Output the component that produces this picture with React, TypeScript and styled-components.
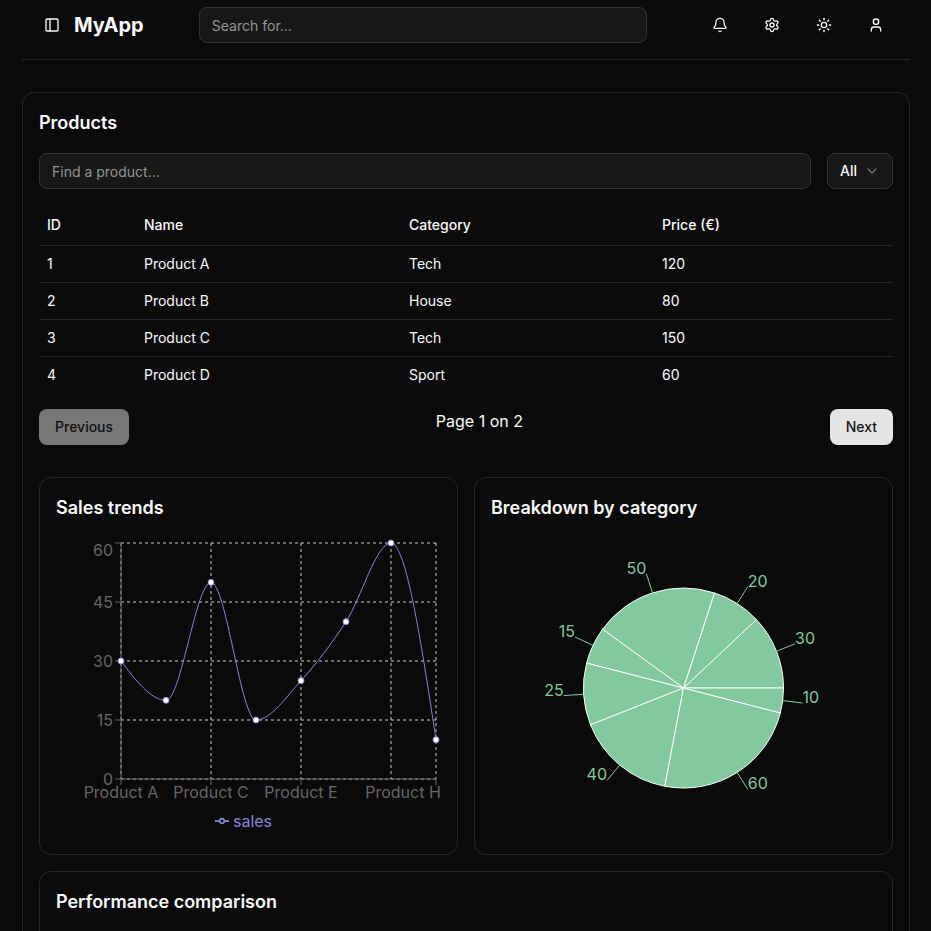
import React from "react";
import styled, { createGlobalStyle } from "styled-components";
import { PanelLeft, Bell, Settings, Sun, User, ChevronDown } from "lucide-react";

const Global = createGlobalStyle`
  html, body { margin: 0; padding: 0; background: #0a0a0a; }
  * { box-sizing: border-box; }
  body { font-family: Inter, "Liberation Sans", sans-serif; color: #fafafa; font-size: 16px; line-height: 24px; }
  input::placeholder { color: #949494; opacity: 1; }
`;

const Page = styled.div`
  padding: 0 21px 32px 22px;
`;
const Header = styled.header`
  height: 60px;
  padding: 7px 16px 16px 12px;
  border-bottom: 1px solid #262626;
  display: flex;
  align-items: center;
  justify-content: space-between;
`;
const Brand = styled.div`
  display: flex;
  align-items: center;
  gap: 4px;
`;
const IconButton = styled.button`
  width: 36px;
  height: 36px;
  padding: 0;
  border: 0;
  background: transparent;
  color: #fafafa;
  display: flex;
  align-items: center;
  justify-content: center;
`;
const Logo = styled.span`
  font-size: 20px;
  line-height: 28px;
  font-weight: 700;
`;
const TextField = styled.input<{ $wide?: boolean }>`
  height: 36px;
  ${(p) => (p.$wide ? "flex: 1; min-width: 0;" : "width: 448px;")}
  padding: 4px 12px;
  border-radius: 8px;
  border: 1px solid #343434;
  background: #171717;
  color: #fafafa;
  font: 400 14px/20px Inter, "Liberation Sans", sans-serif;
  outline: none;
`;
const IconRow = styled.div`
  display: flex;
  gap: 16px;
`;
const Main = styled.main`
  margin-top: 32px;
  padding: 16px;
  border: 1px solid #262626;
  border-radius: 12px;
`;
const CardTitle = styled.h2`
  margin: 0;
  font-size: 18px;
  line-height: 28px;
  font-weight: 600;
  color: #fafafa;
`;
const Toolbar = styled.div`
  display: flex;
  gap: 16px;
  margin-top: 16px;
  margin-bottom: 16px;
`;
const SelectBox = styled.button`
  width: 66px;
  height: 36px;
  padding: 0 12px;
  border-radius: 8px;
  border: 1px solid #343434;
  background: #171717;
  color: #fafafa;
  font: 500 14px/20px Inter, "Liberation Sans", sans-serif;
  display: flex;
  align-items: center;
  justify-content: space-between;
  svg { color: #737373; }
`;
const Table = styled.table`
  width: 854px;
  table-layout: fixed;
  border-collapse: collapse;
  font-size: 14px;
  line-height: 20px;
`;
const Head = styled.th<{ $w: number }>`
  width: ${(p) => p.$w}px;
  height: 40px;
  padding: 0 8px;
  text-align: left;
  font-weight: 500;
  color: #fafafa;
  border-bottom: 1px solid #262626;
`;
const Row = styled.tr`
  border-bottom: 1px solid #262626;
  &:last-child { border-bottom: 0; }
`;
const Cell = styled.td`
  padding: 8px;
  font-weight: 400;
  color: #fafafa;
`;
const Pager = styled.div`
  margin-top: 16px;
  display: flex;
  justify-content: space-between;
  align-items: flex-start;
`;
const PageLabel = styled.span`
  font-size: 16px;
  line-height: 24px;
  color: #fafafa;
`;
const PagerButton = styled.button<{ $off?: boolean }>`
  height: 36px;
  padding: 0 16px;
  border: 0;
  border-radius: 8px;
  background: #e5e5e5;
  color: #171717;
  opacity: ${(p) => (p.$off ? 0.5 : 1)};
  font: 500 14px/20px Inter, "Liberation Sans", sans-serif;
`;
const ChartGrid = styled.div`
  margin-top: 32px;
  display: grid;
  grid-template-columns: 419px 419px;
  gap: 16px;
`;
const Card = styled.section<{ $span?: boolean }>`
  padding: 16px;
  border: 1px solid #262626;
  border-radius: 12px;
  ${(p) => (p.$span ? "grid-column: 1 / span 2;" : "")}
`;
const ChartBox = styled.div`
  margin-top: 16px;
  width: 385px;
  height: 300px;
  display: flex;
  flex-direction: column;
  align-items: center;
`;
const Placeholder = styled.div`
  margin-top: 16px;
  height: 300px;
`;
const ChartSvg = styled.svg`
  display: block;
  flex: none;
  font-family: Inter, "Liberation Sans", sans-serif;
  font-size: 16px;
`;
const Legend = styled.div`
  display: flex;
  align-items: center;
  gap: 4px;
  margin-right: 10px;
  color: #8884d8;
  font-size: 16px;
  line-height: 24px;
`;

const sales = [30, 20, 50, 15, 25, 40, 60, 10];
const pts = sales.map((v, i) => ({ x: 65 + i * 45, y: 241 - (v * 236) / 60 }));

function monotonePath(p: { x: number; y: number }[]) {
  const n = p.length;
  const sign = (v: number) => (v < 0 ? -1 : 1);
  const s: number[] = [];
  for (let i = 0; i < n - 1; i++) s.push((p[i + 1].y - p[i].y) / (p[i + 1].x - p[i].x));
  const t: number[] = new Array(n);
  for (let i = 1; i < n - 1; i++) {
    const h0 = p[i].x - p[i - 1].x;
    const h1 = p[i + 1].x - p[i].x;
    const q = (s[i - 1] * h1 + s[i] * h0) / (h0 + h1);
    t[i] = (sign(s[i - 1]) + sign(s[i])) * Math.min(Math.abs(s[i - 1]), Math.abs(s[i]), 0.5 * Math.abs(q)) || 0;
  }
  t[0] = (3 * s[0] - t[1]) / 2;
  t[n - 1] = (3 * s[n - 2] - t[n - 2]) / 2;
  let d = `M${p[0].x},${p[0].y}`;
  for (let i = 0; i < n - 1; i++) {
    const dx = (p[i + 1].x - p[i].x) / 3;
    d += `C${p[i].x + dx},${p[i].y + dx * t[i]},${p[i + 1].x - dx},${p[i + 1].y - dx * t[i + 1]},${p[i + 1].x},${p[i + 1].y}`;
  }
  return d;
}

const SalesChart = () => {
  const hs = [5, 64, 123, 182, 241];
  const vs = [65, 155, 245, 335, 380];
  const yl = [
    ["60", 5, 12],
    ["45", 64, 64],
    ["30", 123, 123],
    ["15", 182, 182],
    ["0", 241, 241],
  ] as const;
  const xl = [
    ["Product A", 65, 65],
    ["Product C", 155, 155],
    ["Product E", 245, 245],
    ["Product H", 347, 380],
  ] as const;
  return (
    <ChartBox>
      <ChartSvg width={385} height={271} viewBox="0 0 385 271">
        <g stroke="#ccc" strokeDasharray="3 3" fill="none">
          {hs.map((y) => (
            <line key={y} x1={65} x2={380} y1={y} y2={y} />
          ))}
          {vs.map((x) => (
            <line key={x} x1={x} x2={x} y1={5} y2={241} />
          ))}
        </g>
        <g stroke="#666" fill="none">
          <line x1={65} x2={65} y1={5} y2={241} />
          <line x1={65} x2={380} y1={241} y2={241} />
          {yl.map(([, y]) => (
            <line key={y} x1={59} x2={65} y1={y} y2={y} />
          ))}
          {xl.map(([, , t]) => (
            <line key={t} x1={t} x2={t} y1={241} y2={247} />
          ))}
        </g>
        <g fill="#666">
          {yl.map(([l, , ly]) => (
            <text key={l} x={57} y={ly} dy="0.355em" textAnchor="end">
              {l}
            </text>
          ))}
          {xl.map(([l, x]) => (
            <text key={l} x={x} y={249} dy="0.71em" textAnchor="middle">
              {l}
            </text>
          ))}
        </g>
        <path d={monotonePath(pts)} fill="none" stroke="#8884d8" strokeWidth={1} />
        {pts.map((p) => (
          <circle key={p.x} cx={p.x} cy={p.y} r={3} fill="#fff" stroke="#8884d8" strokeWidth={1} />
        ))}
      </ChartSvg>
      <Legend>
        <svg width={14} height={14} viewBox="0 0 32 32">
          <path
            d="M0,16h10.67A5.33,5.33,0,1,1,21.33,16H32M21.33,16A5.33,5.33,0,1,1,10.67,16"
            fill="none"
            stroke="#8884d8"
            strokeWidth={4}
          />
        </svg>
        sales
      </Legend>
    </ChartBox>
  );
};

const CategoryChart = () => {
  const cx = 192.5;
  const cy = 150;
  const R = 100;
  const total = sales.reduce((a, b) => a + b, 0);
  let a0 = 0;
  const at = (deg: number, r: number) => {
    const rad = (deg * Math.PI) / 180;
    return { x: cx + r * Math.cos(rad), y: cy - r * Math.sin(rad) };
  };
  const slices = sales.map((v) => {
    const span = (v / total) * 360;
    const start = a0;
    a0 += span;
    const p0 = at(start, R);
    const p1 = at(start + span, R);
    const mid = start + span / 2;
    return {
      v,
      d: `M${cx},${cy}L${p0.x},${p0.y}A${R},${R},0,${span > 180 ? 1 : 0},0,${p1.x},${p1.y}Z`,
      a: at(mid, R),
      b: at(mid, R + 20),
    };
  });
  return (
    <ChartBox>
      <ChartSvg width={385} height={300} viewBox="0 0 385 300">
        {slices.map((s) => (
          <path key={s.v} d={s.d} fill="#82ca9d" stroke="#fff" />
        ))}
        {slices.map((s) => (
          <g key={s.v}>
            <line x1={s.a.x} y1={s.a.y} x2={s.b.x} y2={s.b.y} stroke="#82ca9d" />
            <text x={s.b.x} y={s.b.y} fill="#82ca9d" textAnchor={s.b.x > cx ? "start" : "end"}>
              {s.v}
            </text>
          </g>
        ))}
      </ChartSvg>
    </ChartBox>
  );
};

const products = [
  [1, "Product A", "Tech", 120],
  [2, "Product B", "House", 80],
  [3, "Product C", "Tech", 150],
  [4, "Product D", "Sport", 60],
] as const;

export default function App() {
  return (
    <Page>
      <Global />
      <Header>
        <Brand>
          <IconButton aria-label="Toggle sidebar">
            <PanelLeft size={16} />
          </IconButton>
          <Logo>MyApp</Logo>
        </Brand>
        <TextField placeholder="Search for..." />
        <IconRow>
          <IconButton aria-label="Notifications">
            <Bell size={16} />
          </IconButton>
          <IconButton aria-label="Settings">
            <Settings size={16} />
          </IconButton>
          <IconButton aria-label="Theme">
            <Sun size={16} />
          </IconButton>
          <IconButton aria-label="Account">
            <User size={16} />
          </IconButton>
        </IconRow>
      </Header>
      <Main>
        <CardTitle>Products</CardTitle>
        <Toolbar>
          <TextField $wide placeholder="Find a product..." />
          <SelectBox>
            All
            <ChevronDown size={16} />
          </SelectBox>
        </Toolbar>
        <Table>
          <thead>
            <tr>
              <Head $w={97}>ID</Head>
              <Head $w={265}>Name</Head>
              <Head $w={253}>Category</Head>
              <Head $w={239}>Price (€)</Head>
            </tr>
          </thead>
          <tbody>
            {products.map((p) => (
              <Row key={p[0]}>
                <Cell>{p[0]}</Cell>
                <Cell>{p[1]}</Cell>
                <Cell>{p[2]}</Cell>
                <Cell>{p[3]}</Cell>
              </Row>
            ))}
          </tbody>
        </Table>
        <Pager>
          <PagerButton $off>Previous</PagerButton>
          <PageLabel>Page 1 on 2</PageLabel>
          <PagerButton>Next</PagerButton>
        </Pager>
        <ChartGrid>
          <Card>
            <CardTitle>Sales trends</CardTitle>
            <SalesChart />
          </Card>
          <Card>
            <CardTitle>Breakdown by category</CardTitle>
            <CategoryChart />
          </Card>
          <Card $span>
            <CardTitle>Performance comparison</CardTitle>
            <Placeholder />
          </Card>
        </ChartGrid>
      </Main>
    </Page>
  );
}
